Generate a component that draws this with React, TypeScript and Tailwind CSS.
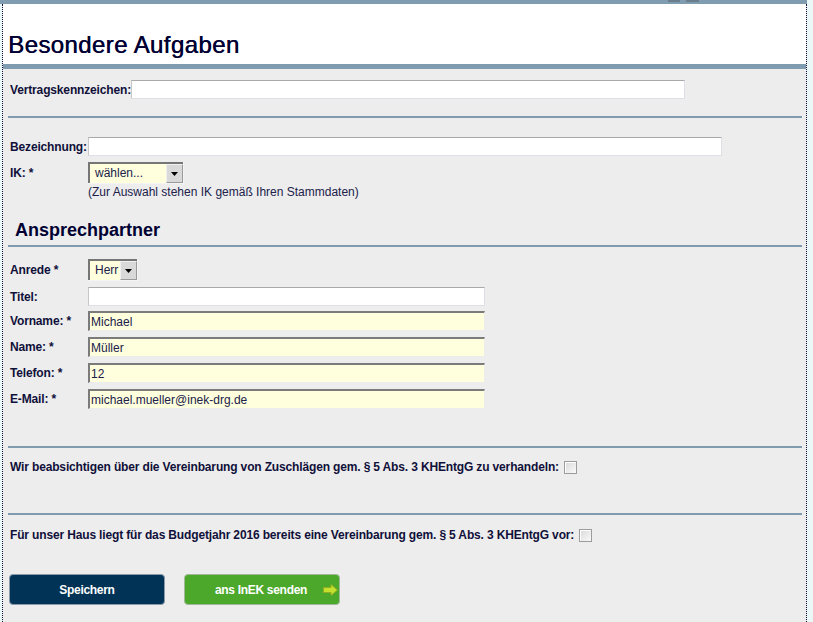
import React from 'react';

const labelCls = "text-[12px] font-bold leading-[14px] whitespace-nowrap tracking-[-0.15px] text-[#10103a]";

function Divider() {
  return <div className="ml-[5px] mr-[4px] h-[2px] bg-[#7f9bae]" />;
}

function WhiteInput({ width }: { width: string }) {
  return (
    <div
      className={`${width} h-[19px] bg-white border border-[#dde1e6] border-t-[#a9a9a9] border-l-[#c9c9c9]`}
    />
  );
}

function YellowInput({ value }: { value: string }) {
  return (
    <div className="w-[397px] h-[20px] bg-[#ffffdd] border border-[#ececec] border-t-2 border-l-2 border-t-[#7b7b7b] border-l-[#7b7b7b] flex items-center pl-[1px] text-[12px] text-[#20204a]">
      {value}
    </div>
  );
}

function SelectBox({ width, text }: { width: string; text: string }) {
  return (
    <div className={`${width} h-[22px] flex bg-[#f4f4f4] pr-[1px] pb-[1px]`}>
      <div className="flex-1 flex border-t-2 border-l-2 border-[#767676] bg-[#ffffdd] overflow-hidden">
        <div className="flex-1 pl-[5px] text-[12px] leading-[19px] text-[#20204a] overflow-hidden whitespace-nowrap">
          {text}
        </div>
        <div className="w-[17px] h-full bg-[#d9d9d9] border border-[#9a9a9a] border-t-[#f0f0f0] border-l-[#f0f0f0] flex items-center justify-center">
          <svg width="7" height="4" viewBox="0 0 7 4">
            <polygon points="0,0 7,0 3.5,4" fill="#000" />
          </svg>
        </div>
      </div>
    </div>
  );
}

function Checkbox() {
  return (
    <span className="inline-block w-[13px] h-[13px] border border-[#9c9c9c] bg-gradient-to-br from-[#d9d9d9] to-[#fafafa] shadow-[inset_1px_1px_0_#ffffff]" />
  );
}

function FieldRow({ label, labelWidth, children, className }: { label: string; labelWidth: string; children: React.ReactNode; className: string }) {
  return (
    <div className={`flex items-center pl-[7px] ${className}`}>
      <div className={`${labelWidth} ${labelCls}`}>{label}</div>
      {children}
    </div>
  );
}

export default function App() {
  return (
    <div className="w-[813px] h-[622px] overflow-hidden bg-[#eaf8f8] font-['Liberation_Sans',Arial,sans-serif]">
      <div className="w-[807px] h-full flex flex-col">
        <div className="h-[4px] bg-[#7f9cb0] relative shrink-0">
          <div className="absolute left-[668px] top-0 w-[12px] h-[2px] bg-[#6a7d8c]" />
          <div className="absolute left-[686px] top-0 w-[13px] h-[2px] bg-[#6a7d8c]" />
        </div>
        <div className="flex-1 ml-[2px] border-l border-r border-dotted border-[#10103a] bg-[#ededed] flex flex-col">
          <div className="h-[60px] bg-white pt-[29px] pl-[5px] shrink-0">
            <h1 className="text-[24px] leading-[24px] tracking-[0.4px] text-[#000033] [text-shadow:0.5px_0_0_#000033]">Besondere Aufgaben</h1>
          </div>
          <div className="h-[5px] bg-[#7f9cb0] shrink-0" />

          <FieldRow label="Vertragskennzeichen:" labelWidth="w-[121px]" className="mt-[11px]">
            <WhiteInput width="w-[554px]" />
          </FieldRow>

          <div className="mt-[17px]">
            <Divider />
          </div>

          <FieldRow label="Bezeichnung:" labelWidth="w-[78px]" className="mt-[19px]">
            <WhiteInput width="w-[634px]" />
          </FieldRow>

          <FieldRow label="IK: *" labelWidth="w-[78px]" className="mt-[6px]">
            <SelectBox width="w-[96px]" text="wählen..." />
          </FieldRow>
          <div className="mt-[1px] pl-[85px] text-[12px] leading-[14px] text-[#20204a]">
            (Zur Auswahl stehen IK gemäß Ihren Stammdaten)
          </div>

          <h2 className="mt-[21px] pl-[12px] text-[18px] font-bold leading-[20px] text-[#000033]">Ansprechpartner</h2>
          <div className="mt-[5px]">
            <Divider />
          </div>

          <FieldRow label="Anrede *" labelWidth="w-[78px]" className="mt-[12px]">
            <SelectBox width="w-[50px]" text="Herr" />
          </FieldRow>
          <FieldRow label="Titel:" labelWidth="w-[78px]" className="mt-[6px]">
            <WhiteInput width="w-[397px]" />
          </FieldRow>
          <FieldRow label="Vorname: *" labelWidth="w-[78px]" className="mt-[5px]">
            <YellowInput value="Michael" />
          </FieldRow>
          <FieldRow label="Name: *" labelWidth="w-[78px]" className="mt-[6px]">
            <YellowInput value="Müller" />
          </FieldRow>
          <FieldRow label="Telefon: *" labelWidth="w-[78px]" className="mt-[6px]">
            <YellowInput value="12" />
          </FieldRow>
          <FieldRow label="E-Mail: *" labelWidth="w-[78px]" className="mt-[6px]">
            <YellowInput value="michael.mueller@inek-drg.de" />
          </FieldRow>

          <div className="mt-[37px]">
            <Divider />
          </div>
          <div className="mt-[12px] pl-[7px] flex items-center gap-[5px] h-[14px]">
            <span className={labelCls}>
              Wir beabsichtigen über die Vereinbarung von Zuschlägen gem. § 5 Abs. 3 KHEntgG zu verhandeln:
            </span>
            <Checkbox />
          </div>

          <div className="mt-[39px]">
            <Divider />
          </div>
          <div className="mt-[13px] pl-[7px] flex items-center gap-[5px] h-[14px]">
            <span className={labelCls}>
              Für unser Haus liegt für das Budgetjahr 2016 bereits eine Vereinbarung gem. § 5 Abs. 3 KHEntgG vor:
            </span>
            <Checkbox />
          </div>

          <div className="mt-[32px] pl-[6px] flex gap-[19px]">
            <button className="w-[156px] h-[31px] rounded-[4px] bg-[#003356] border border-[#8a9aa8] text-white text-[12px] font-bold tracking-[-0.3px]">
              Speichern
            </button>
            <button className="w-[156px] h-[31px] rounded-[4px] bg-[#4ca82b] border border-[#a0b898] text-white text-[12px] font-bold tracking-[-0.3px] flex items-center pl-[14px] pr-[1px]">
              <span className="flex-1 text-center">ans InEK senden</span>
              <svg width="15" height="12" viewBox="0 0 15 12">
                <polygon points="0.5,3.5 8,3.5 8,0.5 14.5,6 8,11.5 8,8.5 0.5,8.5" fill="#c4e02e" stroke="#8fae1e" strokeWidth="1" />
              </svg>
            </button>
          </div>
        </div>
      </div>
    </div>
  );
}
